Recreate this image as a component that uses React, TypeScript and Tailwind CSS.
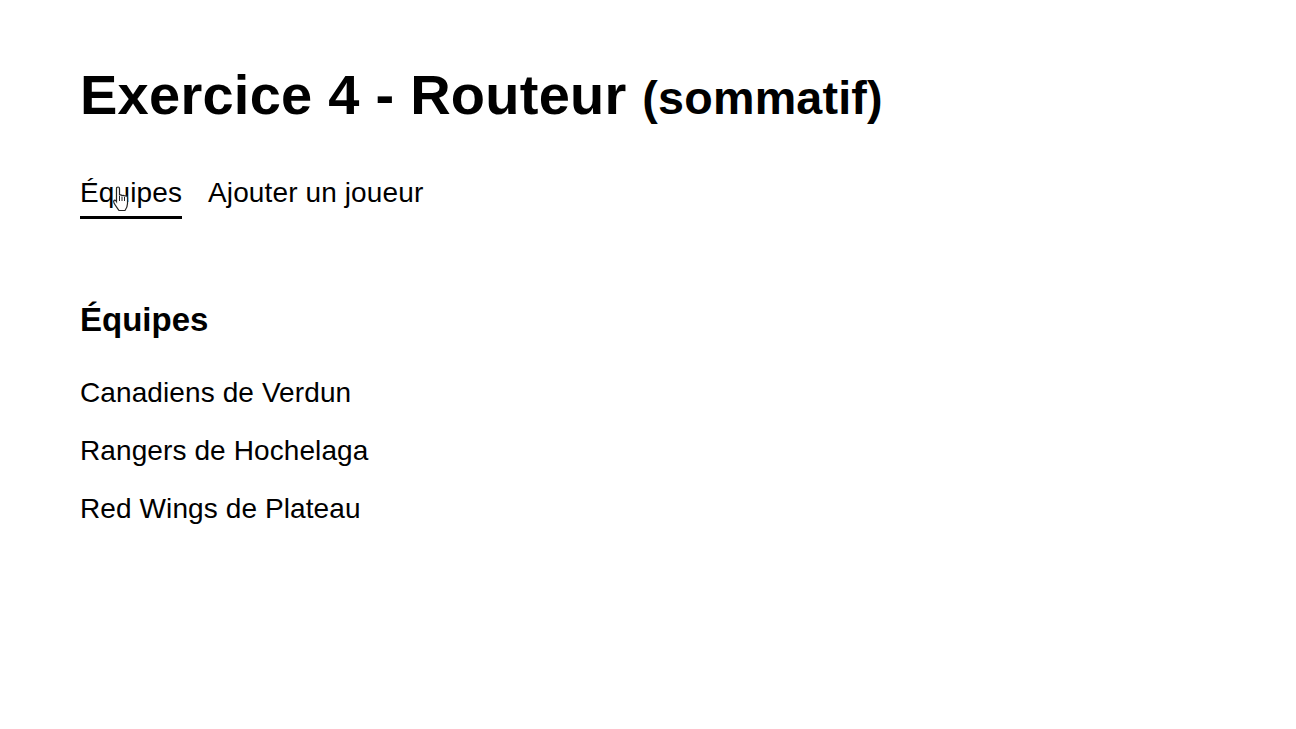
const teams = ["Canadiens de Verdun", "Rangers de Hochelaga", "Red Wings de Plateau"];

const HandCursor = () => (
  <svg className="absolute left-[32px] top-[8px]" width="18" height="27" viewBox="0 0 18 27" fill="none">
    <path
      d="M4.5 14V3.5C4.5 1.5 7.5 1.5 7.5 3.5V10.5C7.5 9.5 10 9.5 10 11C10 10 12.5 10 12.5 11.5C12.5 10.5 15.5 10.5 15.5 12.5V18.5C15.5 21.5 14.5 23.5 13 25.5H7C5.5 23 3.5 21 2 18C0.8 15.5 3 14 4.5 16.5Z"
      fill="#fff"
      stroke="#222"
      strokeWidth="1.2"
    />
    <path d="M7.5 11V16M10 11.5V16M12.5 12V16" stroke="#222" strokeWidth="1" />
  </svg>
);

export default function App() {
  return (
    <div className="min-h-[729px] bg-white px-20 pt-[63px] font-['Liberation_Sans',Arial,sans-serif] text-black">
      <h1 className="text-[56px] leading-[64px] font-bold tracking-[0.25px]">
        Exercice 4 - Routeur <small className="text-[46.67px] font-bold tracking-[0.2px]">(sommatif)</small>
      </h1>

      <nav className="mt-[47px] flex gap-[26px] text-[28px] tracking-[0.12px]">
        <a className="relative border-b-[3px] border-black pb-[7px] leading-[32px]">
          Équipes
          <HandCursor />
        </a>
        <a className="leading-[32px]">Ajouter un joueur</a>
      </nav>

      <h2 className="mt-[81px] text-[33px] leading-[40px] font-bold">Équipes</h2>

      <ul className="mt-[37px] flex flex-col gap-[26px] text-[28px] leading-[32px] tracking-[0.1px]">
        {teams.map((team) => (
          <li key={team}>{team}</li>
        ))}
      </ul>
    </div>
  );
}
